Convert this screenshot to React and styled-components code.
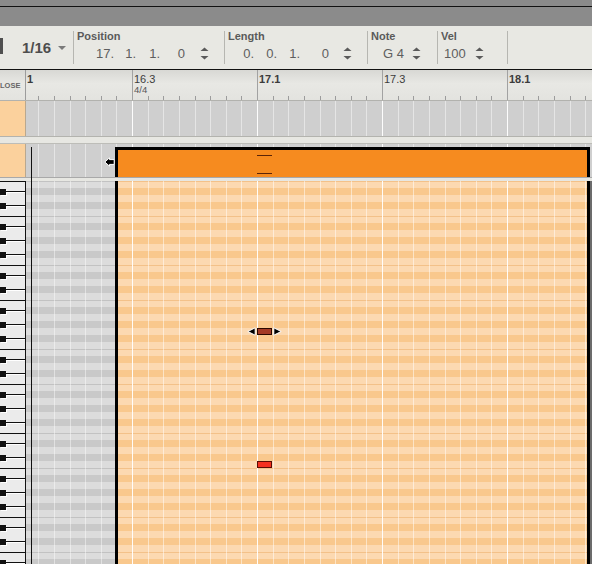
import React from "react";
import styled, { createGlobalStyle } from "styled-components";

const GlobalStyle = createGlobalStyle`
  html, body {
    margin: 0;
    padding: 0;
    background: #8a8a8a;
  }
  body {
    font-family: "Liberation Sans", Arial, sans-serif;
  }
`;

// grid helpers: one bar-half (125px) holds 8 sixteenth lines
const ORIGIN = 132;
const STEP = 125;
const offsetFrom = (start) => (((ORIGIN - start) % STEP) + STEP) % STEP;

const gridLines = (minor, major) => {
  const stops = [];
  for (let k = 0; k < 8; k++) {
    const pos = Math.round(k * 15.625);
    const next = k < 7 ? Math.round((k + 1) * 15.625) : STEP;
    stops.push(`${k === 0 ? major : minor} ${pos}px ${pos + 1}px`);
    stops.push(`transparent ${pos + 1}px ${next}px`);
  }
  return `linear-gradient(90deg, ${stops.join(", ")})`;
};

const BLACK_ROWS = [1, 3, 6, 8, 10];
const rowStripes = (light, dark, edge) => {
  const stops = [];
  for (let i = 0; i < 12; i++) {
    const c = BLACK_ROWS.includes(i) ? dark : light;
    const a = i * 7;
    const b = a + 7;
    if (i === 0 || i === 5) {
      stops.push(`${edge} ${a}px ${a + 1}px`);
      stops.push(`${c} ${a + 1}px ${b}px`);
    } else {
      stops.push(`${c} ${a}px ${b}px`);
    }
  }
  return `linear-gradient(180deg, ${stops.join(", ")})`;
};

const greyLines = gridLines("rgba(255,255,255,0.45)", "rgba(255,255,255,0.95)");
const orangeLines = gridLines("rgba(255,255,255,0.5)", "rgba(255,255,255,0.95)");
const tickLines = gridLines("#9c9c9c", "#9c9c9c");
const greyRows = rowStripes("#dcdcdc", "#c9c9c9", "#c2c2c2");
const orangeRows = rowStripes("#fcd9b1", "#f9c88d", "#f3c189");

const Screen = styled.div`
  width: 592px;
  height: 564px;
  overflow: hidden;
  display: flex;
  flex-direction: column;
  background: #8a8a8a;
`;

const TitleBar = styled.div`
  height: 26px;
  flex: none;
  box-sizing: border-box;
  background: linear-gradient(
    180deg,
    #8a8a8a 0 6px,
    #111 6px 7px,
    #8b8b8b 7px
  );
`;

const Toolbar = styled.div`
  height: 44px;
  flex: none;
  box-sizing: border-box;
  display: flex;
  align-items: flex-start;
  background: #e8e8e3;
  border-bottom: 1px solid #111;
  color: #585858;
`;

const Grip = styled.div`
  width: 3px;
  height: 16px;
  margin-top: 12px;
  background: #4f4f4f;
`;

const Quant = styled.div`
  width: 70px;
  box-sizing: border-box;
  padding-left: 19px;
  align-self: center;
  display: flex;
  align-items: center;
  font-size: 15px;
  font-weight: bold;
  color: #4d4d4d;
`;

const Caret = styled.span`
  width: 0;
  height: 0;
  margin-left: 7px;
  border-left: 4px solid transparent;
  border-right: 4px solid transparent;
  border-top: 4px solid #7a7a7a;
`;

const Field = styled.div`
  width: ${(p) => p.$w}px;
  height: 33px;
  margin-top: 5px;
  box-sizing: border-box;
  border-left: 1px solid #b6b6b1;
  padding-left: 3px;
`;

const Label = styled.div`
  font-size: 11px;
  line-height: 11px;
  font-weight: bold;
  color: #5a5a5a;
`;

const Values = styled.div`
  display: flex;
  align-items: center;
  height: 15px;
  margin-top: 4px;
  margin-left: ${(p) => p.$ml || 0}px;
  font-size: 13px;
  color: #5e5e5e;
`;

const Cell = styled.span`
  width: ${(p) => p.$w}px;
  text-align: right;
  flex: none;
`;

const SpinWrap = styled.span`
  display: flex;
  margin-left: ${(p) => p.$ml}px;
`;

const Spinner = ({ ml }) => (
  <SpinWrap $ml={ml}>
    <svg width="9" height="13" viewBox="0 0 9 13">
      <path d="M0.5 4 L4.5 0.5 L8.5 4 Z" fill="#5a5a5a" />
      <path d="M0.5 9 L8.5 9 L4.5 12.5 Z" fill="#5a5a5a" />
    </svg>
  </SpinWrap>
);

const Ruler = styled.div`
  height: 31px;
  flex: none;
  box-sizing: border-box;
  display: flex;
  border-bottom: 1px solid #b2b2ae;
  background: linear-gradient(180deg, #d8d8d4 0, #e8e8e4 45%, #e3e3df 100%);
`;

const RulerCorner = styled.div`
  width: 26px;
  flex: none;
  box-sizing: border-box;
  border-right: 1px solid #9c9c9c;
  display: flex;
  align-items: center;
  padding-left: 0;
  white-space: nowrap;
  font-size: 7.5px;
  font-weight: bold;
  color: #666;
`;

const Timeline = styled.div`
  flex: 1;
  display: flex;
  background-image: ${tickLines};
  background-size: ${STEP}px 4px;
  background-position: ${offsetFrom(26)}px bottom;
  background-repeat: repeat-x;
`;

const Segment = styled.div`
  width: ${(p) => (p.$w ? `${p.$w}px` : "auto")};
  flex: ${(p) => (p.$w ? "none" : 1)};
  box-sizing: border-box;
  border-left: ${(p) => (p.$first ? "none" : "1px solid #a2a2a2")};
  padding: 3px 0 0 1px;
`;

const Mark = styled.div`
  font-size: 11px;
  line-height: 12px;
  font-weight: ${(p) => (p.$bold ? "bold" : "normal")};
  color: #3c3c3c;
`;

const Meter = styled.div`
  font-size: 9.5px;
  line-height: 10px;
  color: #555;
`;

const Lane = styled.div`
  height: ${(p) => p.$h}px;
  flex: none;
  box-sizing: border-box;
  display: flex;
  border-bottom: ${(p) => (p.$line ? "1px solid #a9a9a9" : "none")};
`;

const LanePanel = styled.div`
  width: 26px;
  flex: none;
  box-sizing: border-box;
  background: #fbd19d;
  border-right: 1px solid #b9a88f;
`;

const LaneGrid = styled.div`
  flex: 1;
  display: flex;
  align-items: flex-start;
  background-color: #cfcfcf;
  background-image: ${greyLines};
  background-size: ${STEP}px 100%;
  background-position: ${offsetFrom(26)}px 0;
`;

const Divider = styled.div`
  height: ${(p) => p.$h}px;
  flex: none;
  box-sizing: border-box;
  background: #e7e7e2;
  border-top: ${(p) => (p.$edges ? "1px solid #b3b3ae" : "none")};
  border-bottom: ${(p) => (p.$edges ? "1px solid #bdbdb8" : "none")};
`;

const Body = styled.div`
  flex: 1;
  display: flex;
  flex-direction: column;
  position: relative;
  min-height: 0;
`;

const Spacer = styled.div`
  width: 89px;
  flex: none;
  align-self: stretch;
  position: relative;
`;

const ClipBlock = styled.div`
  width: 475px;
  height: 30px;
  margin-top: 3px;
  flex: none;
  box-sizing: border-box;
  position: relative;
  background: #f68b1f;
  border: 3px solid #000;
  border-bottom: none;
`;

const Dash = styled.div`
  position: absolute;
  left: 139px;
  top: ${(p) => p.$y}px;
  width: 15px;
  height: 1px;
  background: #5c2406;
`;

const Marker = styled.svg`
  position: absolute;
  left: 78px;
  top: 13px;
`;

const Playhead = styled.div`
  position: absolute;
  left: 31px;
  top: 3px;
  bottom: 0;
  width: 1px;
  background: #111;
`;

const Roll = styled.div`
  flex: 1;
  display: flex;
  overflow: hidden;
`;

const Keys = styled.div`
  width: 26px;
  flex: none;
  box-sizing: border-box;
  background: #ebebeb;
  border-right: 1px solid #111;
`;

const Key = styled.div`
  height: 7px;
  box-sizing: border-box;
  display: flex;
  align-items: center;
  border-top: ${(p) => (p.$edge ? "1px solid #111" : "none")};
`;

const Nub = styled.div`
  width: 6px;
  height: 6px;
  flex: none;
  background: #111;
  box-shadow: 1px 1px 0 #fff;
`;

const KeyLine = styled.div`
  flex: 1;
  height: 1px;
  background: #111;
  box-shadow: 0 1px 0 #fff;
`;

const GreyZone = styled.div`
  width: 89px;
  flex: none;
  background-image: ${greyLines}, ${greyRows};
  background-size: ${STEP}px 100%, 100% 84px;
  background-position: ${offsetFrom(26)}px 0, 0 0;
`;

const ClipZone = styled.div`
  width: 475px;
  flex: none;
  box-sizing: border-box;
  position: relative;
  border-left: 3px solid #000;
  border-right: 3px solid #000;
  background-image: ${orangeLines}, ${orangeRows};
  background-size: ${STEP}px 100%, 100% 84px;
  background-position: ${offsetFrom(118)}px 0, 0 0;
`;

const RightEdge = styled.div`
  flex: 1;
  background: #6c6c6c;
`;

const Note = styled.div`
  position: absolute;
  left: 139px;
  top: ${(p) => p.$row * 7}px;
  width: 15px;
  height: 7px;
  box-sizing: border-box;
  background: ${(p) => (p.$selected ? "#a43a25" : "#f4301f")};
  border: 1px solid ${(p) => (p.$selected ? "#2a0800" : "#5a0d05")};
`;

const Handle = styled.svg`
  position: absolute;
  left: ${(p) => p.$x}px;
  top: ${(p) => p.$row * 7 - 1}px;
`;

const keyRows = Array.from({ length: 56 }, (_, i) => i % 12);

const App = () => {
  return (
    <>
      <GlobalStyle />
      <Screen>
        <TitleBar />
        <Toolbar>
          <Grip />
          <Quant>
            1/16
            <Caret />
          </Quant>
          <Field $w={151}>
            <Label>Position</Label>
            <Values>
              <Cell $w={37}>17.</Cell>
              <Cell $w={22}>1.</Cell>
              <Cell $w={24}>1.</Cell>
              <Cell $w={25}>0</Cell>
              <Spinner ml={15} />
            </Values>
          </Field>
          <Field $w={143}>
            <Label>Length</Label>
            <Values>
              <Cell $w={26}>0.</Cell>
              <Cell $w={23}>0.</Cell>
              <Cell $w={23}>1.</Cell>
              <Cell $w={29}>0</Cell>
              <Spinner ml={14} />
            </Values>
          </Field>
          <Field $w={70}>
            <Label>Note</Label>
            <Values $ml={12}>
              G 4
              <Spinner ml={8} />
            </Values>
          </Field>
          <Field $w={70}>
            <Label>Vel</Label>
            <Values $ml={3}>
              100
              <Spinner ml={9} />
            </Values>
          </Field>
          <Field $w={10} />
        </Toolbar>

        <Ruler>
          <RulerCorner>LOSE</RulerCorner>
          <Timeline>
            <Segment $w={106} $first>
              <Mark $bold>1</Mark>
            </Segment>
            <Segment $w={125}>
              <Mark>16.3</Mark>
              <Meter>4/4</Meter>
            </Segment>
            <Segment $w={125}>
              <Mark $bold>17.1</Mark>
            </Segment>
            <Segment $w={125}>
              <Mark>17.3</Mark>
            </Segment>
            <Segment>
              <Mark $bold>18.1</Mark>
            </Segment>
          </Timeline>
        </Ruler>

        <Lane $h={35}>
          <LanePanel />
          <LaneGrid />
        </Lane>
        <Divider $h={8} $edges />

        <Body>
          <Lane $h={34} $line>
            <LanePanel />
            <LaneGrid>
              <Spacer>
                <Marker width="11" height="10" viewBox="0 0 11 10">
                  <path
                    d="M0.8 5 L5.5 0.8 L5.5 2.6 L10.2 2.6 L10.2 7.4 L5.5 7.4 L5.5 9.2 Z"
                    fill="#000"
                    stroke="#fff"
                    strokeWidth="1"
                  />
                </Marker>
              </Spacer>
              <ClipBlock>
                <Dash $y={5} />
                <Dash $y={23} />
              </ClipBlock>
            </LaneGrid>
          </Lane>
          <Divider $h={3} />

          <Roll>
            <Keys>
              {keyRows.map((n, i) => (
                <Key key={i} $edge={n === 0 || n === 5}>
                  {BLACK_ROWS.includes(n) && (
                    <>
                      <Nub />
                      <KeyLine />
                    </>
                  )}
                </Key>
              ))}
            </Keys>
            <GreyZone />
            <ClipZone>
              <Handle $x={129} $row={21} width="9" height="9" viewBox="0 0 9 9">
                <path d="M0.8 4.5 L8.2 0.8 L8.2 8.2 Z" fill="#000" stroke="#fff" strokeWidth="1" />
              </Handle>
              <Note $row={21} $selected />
              <Handle $x={155} $row={21} width="9" height="9" viewBox="0 0 9 9">
                <path d="M8.2 4.5 L0.8 0.8 L0.8 8.2 Z" fill="#000" stroke="#fff" strokeWidth="1" />
              </Handle>
              <Note $row={40} />
            </ClipZone>
            <RightEdge />
          </Roll>
          <Playhead />
        </Body>
      </Screen>
    </>
  );
};

export default App;
